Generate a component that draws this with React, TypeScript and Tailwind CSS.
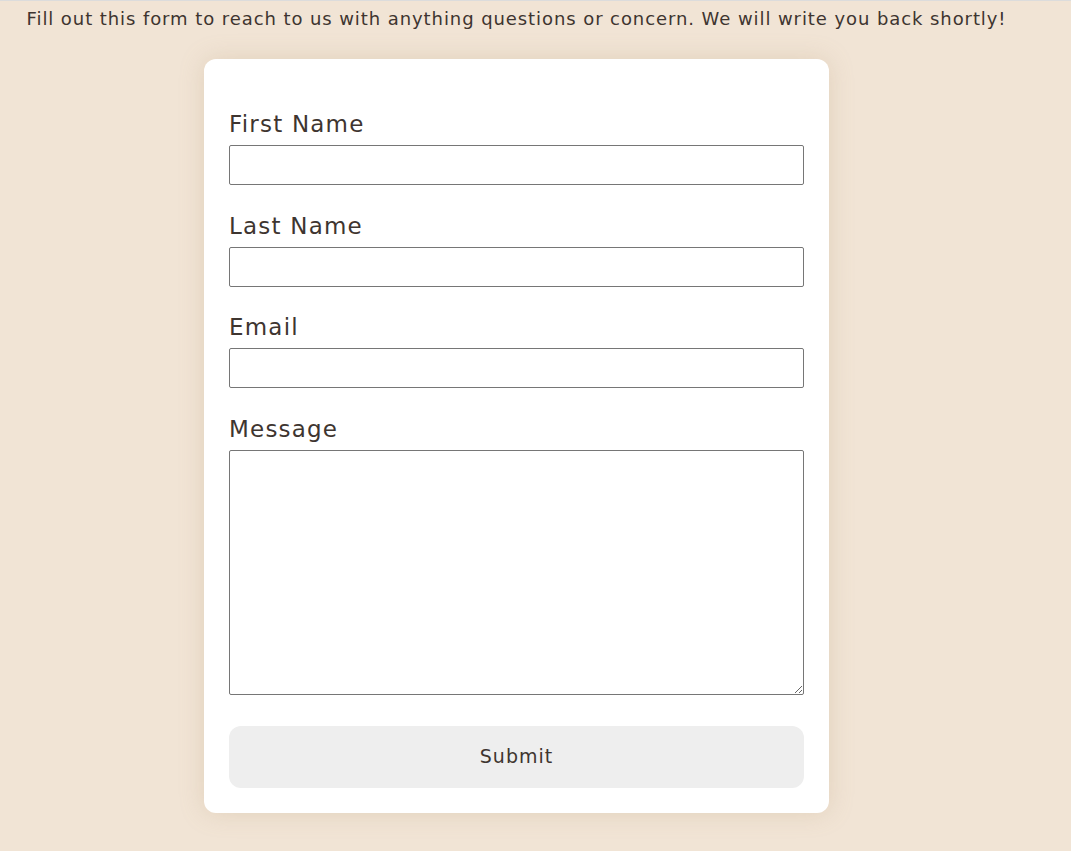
import React from 'react';

const fields = ['First Name', 'Last Name', 'Email'];

export default function App() {
  return (
    <div
      className="min-h-[851px] w-full bg-[#f1e4d5] border-t border-[#dcdcdc] text-[#3e3530]"
      style={{ fontFamily: '"DejaVu Sans", "Open Sans", sans-serif' }}
    >
      <div className="w-[1033px] flex flex-col items-center">
        <p className="mt-[6px] text-[18px] leading-[24px] tracking-[0.92px] whitespace-nowrap">
          Fill out this form to reach to us with anything questions or concern. We will write you back shortly!
        </p>

        {/* Contact Card */}
        <form className="mt-[28px] w-[625px] bg-white rounded-xl shadow-[0_0_24px_rgba(180,150,110,0.25)] px-[25px] pt-[48px] pb-[25px] flex flex-col">
          {fields.map((f) => (
            <div key={f} className="flex flex-col mb-[23.5px]">
              <label className="text-[23px] leading-[34px] mb-[4px] tracking-[1.2px]">{f}</label>
              <input type="text" className="h-[40px] w-full border border-[#767676] rounded-[2px] bg-white" />
            </div>
          ))}
          <div className="flex flex-col">
            <label className="text-[23px] leading-[34px] mb-[4px] tracking-[1.2px]">Message</label>
            <textarea className="h-[245px] w-full border border-[#767676] rounded-[2px] bg-white resize-y" />
          </div>
          <button type="button" className="mt-[31px] h-[62px] w-full rounded-xl bg-[#eeeeee] text-[19px] tracking-[1px] text-[#3e3530]">
            Submit
          </button>
        </form>
      </div>
    </div>
  );
}
